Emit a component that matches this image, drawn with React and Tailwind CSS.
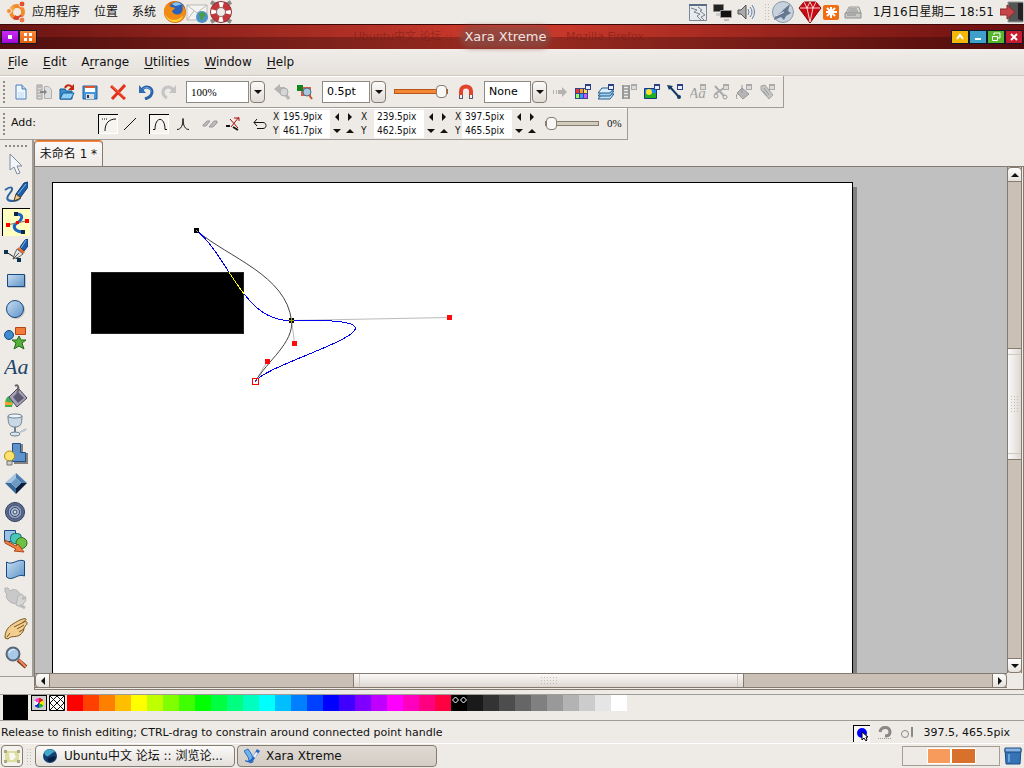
import { useState } from "react";
import clsx from "clsx";

const SWATCHES = [
  "bg-[#ff0000]", "bg-[#ff4000]", "bg-[#ff8000]", "bg-[#ffbf00]", "bg-[#ffff00]", "bg-[#bfff00]",
  "bg-[#80ff00]", "bg-[#40ff00]", "bg-[#00ff00]", "bg-[#00ff40]", "bg-[#00ff80]", "bg-[#00ffbf]",
  "bg-[#00ffff]", "bg-[#00bfff]", "bg-[#0080ff]", "bg-[#0040ff]", "bg-[#0000ff]", "bg-[#4000ff]",
  "bg-[#8000ff]", "bg-[#bf00ff]", "bg-[#ff00ff]", "bg-[#ff00bf]", "bg-[#ff0080]", "bg-[#ff0040]",
  "bg-[#000000]", "bg-[#1a1a1a]", "bg-[#333333]", "bg-[#4d4d4d]", "bg-[#666666]", "bg-[#808080]",
  "bg-[#999999]", "bg-[#b3b3b3]", "bg-[#cccccc]", "bg-[#e5e5e5]", "bg-[#ffffff]",
];

function Svg({ s = 16, children, className }) {
  return (
    <svg viewBox={`0 0 ${s} ${s}`} width={s} height={s} className={clsx("shrink-0", className)} aria-hidden="true" fill="none">
      {children}
    </svg>
  );
}

// little window in the corner of every gallery icon
function Badge({ off }) {
  return (
    <>
      <rect x="10.5" y="0.5" width="5" height="5" fill={off ? "#dcdcda" : "#e8f0fa"} stroke={off ? "#aaa" : "#2b3f86"} />
      <path d="M10 1h6" stroke={off ? "#aaa" : "#2b3f86"} strokeWidth="2" />
    </>
  );
}

const bar = {
  fresh: <Svg><path d="M3 1h6l4 4v10H3z" fill="#eef6ff" stroke="#4a7fbb" /><path d="M9 1v4h4" fill="#b9d7f2" stroke="#4a7fbb" /><path d="M5 8h6v6H5z" fill="#d5e8fa" /></Svg>,
  film: <Svg><path d="M1 1h5v14H1z" fill="#ddd" stroke="#999" /><path d="M2 3h3M2 6h3M2 9h3M2 12h3" stroke="#999" /><path d="M8.500 2.500h4l3 3v9h-7z" fill="#dedede" stroke="#b0b0b0" /><path d="M4 8h5" stroke="#888" strokeWidth="2" /><path d="M8 5l3 3-3 3z" fill="#888" /></Svg>,
  open: <Svg><path d="M1 5h5l1 2h6v8H1z" fill="#3c8fd0" stroke="#155a94" /><path d="M1 15l3-6h11l-3 6z" fill="#8fd0fa" stroke="#155a94" /><path d="M6 4c2-4 5-3 7-1" stroke="#c3260e" strokeWidth="2" /><path d="M15 0v6H9z" fill="#c3260e" /></Svg>,
  save: <Svg><path d="M1 2h14v13H1z" fill="#4596dd" stroke="#1f5f9f" /><path d="M3 3h10v5H3z" fill="#fff" /><path d="M3 2h10v2H3z" fill="#e2552d" /><path d="M4 10h8v5H4z" fill="#d8dde2" /><path d="M5 11h2v3H5z" fill="#334" /></Svg>,
  remove: <Svg><path d="M1 2l14 13M15 1L2 15" stroke="#e3321a" strokeWidth="3" /><path d="M2 2l12 11" stroke="#f6664b" /></Svg>,
  undo: <Svg><path d="M4 6c3-5 10-3 10 2 0 4-4 6-7 7" stroke="#2b63a8" strokeWidth="3" /><path d="M4 6c3-4 9-3 9 2" stroke="#6fa8e0" /><path d="M1 1v8h7z" fill="#2f6cb3" /></Svg>,
  redo: <Svg><path d="M12 6c-3-5-10-3-10 2 0 3 2 5 4 6" stroke="#c4c4c4" strokeWidth="3" /><path d="M15 1v8H8z" fill="#c4c4c4" /></Svg>,
  zoomPrev: <Svg><path d="M0 5l6-5v3h5v5H6v2z" fill="#b5b5b5" /><circle cx="10" cy="8" r="4" fill="#d6d6d6" stroke="#aaa" /><path d="M12 11l3 4" stroke="#b5b5b5" strokeWidth="3" /></Svg>,
  zoom: <Svg><path d="M4 3h10v9H4z" fill="#df5a41" /><path d="M0 1h6v6H0z" fill="#15831f" /><circle cx="10" cy="8" r="4" fill="#a7c6e2" stroke="#4d6b87" /><path d="M12 11l3 4" stroke="#c7512d" strokeWidth="2" /></Svg>,
  magnet: <Svg><path d="M3 14V7c0-6 10-6 10 0v7" stroke="#e3432a" strokeWidth="4" /><path d="M3 15v-4M13 15v-4" stroke="#5b5b64" strokeWidth="4" /><path d="M3 14v-3M13 14v-3" stroke="#eef" strokeWidth="2" /></Svg>,
  arrow: <Svg><path d="M1 6h1v4H1zM4 6h1v4H4zM6 6h4V3l5 5-5 5v-3H6z" fill="#b2b2b0" /></Svg>,
  colours: <Svg><path d="M0 4h13v11H0z" fill="#33468b" /><path d="M1 5h3v4H1z" fill="#e33" /><path d="M5 5h3v4H5z" fill="#f8a020" /><path d="M9 5h3v4H9z" fill="#fd5" /><path d="M1 10h3v4H1z" fill="#9f6" /><path d="M5 10h3v4H5z" fill="#39f" /><path d="M9 10h3v4H9z" fill="#c5f" /><Badge /></Svg>,
  layers: <Svg><path d="M4 10h12l-4 5H0z" fill="#bfe0f2" stroke="#225b8c" /><path d="M4 7h12l-4 5H0z" fill="#9fcdec" stroke="#225b8c" /><path d="M4 4h12l-4 5H0z" fill="#d6eefb" stroke="#225b8c" /><Badge /></Svg>,
  frames: <Svg><path d="M1 1h2v14H1zM7 1h2v14H7z" fill="#999" /><path d="M3 2h4M3 5h4M3 8h4M3 11h4M3 14h4" stroke="#aaa" strokeWidth="2" /><Badge off /></Svg>,
  bitmap: <Svg><path d="M.500 4.500h12v10H.500z" fill="#1a8df0" stroke="#123a80" /><path d="M1 10c4-2 7 0 11-1v5H1z" fill="#1fae26" /><circle cx="5" cy="8" r="3" fill="#ffe32e" /><Badge /></Svg>,
  line: <Svg><path d="M3 3l9 10" stroke="#123a66" strokeWidth="2" /><path d="M0 1l6 1-4 4z" fill="#123a66" /><circle cx="12" cy="13" r="2" fill="#123a66" /><Badge /></Svg>,
  fonts: <Svg><text x="-1" y="14" className="[font-family:'Liberation_Serif',serif] text-[15px] italic" fill="#a0a0a0">Aa</text><Badge off /></Svg>,
  clip: <Svg><path d="M2 2l9 10M11 4l-9 6" stroke="#aaa" strokeWidth="2" /><circle cx="3" cy="12" r="2" stroke="#999" /><circle cx="12" cy="13" r="2" stroke="#999" /><Badge off /></Svg>,
  fills: <Svg><path d="M6 4l7 6-6 5-6-6z" fill="#b5b5b5" stroke="#999" /><path d="M6 1v8M2 9c-2 2-2 4-1 6" stroke="#999" /><Badge off /></Svg>,
  names: <Svg><path d="M2 2l4-1 8 10-4 4L2 6z" fill="#c4c4c4" stroke="#a5a5a5" /><path d="M5 4l5 7M4 7l4 5" stroke="#999" /><Badge off /></Svg>,
};

const GALLERIES = [
  ["Color gallery", bar.colours], ["Layer gallery", bar.layers], ["Frame gallery", bar.frames],
  ["Bitmap gallery", bar.bitmap], ["Line gallery", bar.line], ["Font gallery", bar.fonts],
  ["Clipart gallery", bar.clip], ["Fill gallery", bar.fills], ["Name gallery", bar.names],
];

const TOOLS = [
  ["Selector", <Svg s={24}><path d="M6 2v16l4-3 3 7 3-1-3-7h5z" fill="#f3f5f9" stroke="#7d8ba0" /></Svg>],
  ["Freehand", <Svg s={24}><path d="M1 9c7-5 9-2 5 3s-4 8 3 8c3 0 5-1 7-3" stroke="#2a62a3" strokeWidth="2" /><path d="M12 13L20 2l4-1v5l-8 11z" fill="#1d5fa8" stroke="#103c70" /><path d="M14 13l8-10" stroke="#80b8e8" /><path d="M10 20l2-7 5 4z" fill="#ecc98a" stroke="#4c3a20" /></Svg>],
  ["Shape editor", <Svg s={24}><path d="M11 3c9 0 6 6 1 9s-3 8 5 9" stroke="#1b65c3" strokeWidth="3" /><path d="M2 14l19-4" stroke="#777" /><path d="M9 1h4v4H9zM16 19h4v4h-4z" fill="#0b2a48" /><path d="M1 12h4v4H1zM20 8h4v4h-4zM11 10h3v3h-3z" fill="#f00" /></Svg>],
  ["Pen", <Svg s={24}><path d="M2 13l13 8" stroke="#222" /><path d="M0 11h4v4H0zM13 19h4v4h-4z" fill="#0b3452" /><path d="M16 8l5-7 3-1v7l-4 5z" fill="#1d5fa8" stroke="#103c70" /><path d="M17 9l5-8" stroke="#80b8e8" /><path d="M15 8l6 5-2 2-6-5z" fill="#e66b2c" /><path d="M13 10l6 5-4 3-6 2 2-6z" fill="#e4e4e4" stroke="#666" /><path d="M9 20l6-6" stroke="#555" /></Svg>],
  ["Rectangle", <Svg s={24}><path d="M4 7h18v13H4z" fill="#999" opacity=".5" /><path d="M3.500 6.500h17v12h-17z" fill="url(#blue)" stroke="#174a80" /></Svg>],
  ["Ellipse", <Svg s={24}><circle cx="12" cy="13" r="9" fill="#999" opacity=".5" /><circle cx="11" cy="12" r="8.500" fill="url(#blue)" stroke="#174a80" /></Svg>],
  ["QuickShape", <Svg s={24}><circle cx="5" cy="9" r="4.500" fill="#3e8bd2" stroke="#174a80" /><path d="M11.500 1.500h10v7h-10z" fill="#f27b3b" stroke="#b34616" /><path d="M15 10l2 4h5l-4 3 2 6-5-3-5 3 2-6-4-3h5z" fill="#55b13c" stroke="#246c1a" /></Svg>],
  ["Text", <Svg s={24}><text x="0" y="19" className="[font-family:'Liberation_Serif',serif] text-[22px] italic" fill="#22456c">Aa</text></Svg>],
  ["Fill", <Svg s={24}><path d="M5 12c-4 2-4 6-4 11h7l1-5z" fill="#3fae55" /><path d="M1 17c2 1 4 2 7 1v3H1z" fill="#f7a02b" /><path d="M5 13l9-9 9 10-10 9z" fill="#a5a1b8" stroke="#484558" /><path d="M9 13l5-5 6 6-6 5z" fill="#5d5a72" /><path d="M11 2c4-3 4 4 2 7" stroke="#666" strokeWidth="2" /></Svg>],
  ["Transparency", <Svg s={24}><path d="M14 20c6-5 9-5 9-4s-4 4-9 4" fill="#b9c6d0" /><path d="M4 3c0 9 2 11 7 11s7-2 7-11z" fill="#c9d8e5" stroke="#6d8193" /><ellipse cx="11" cy="3" rx="7" ry="2" fill="#eef4f8" stroke="#6d8193" /><path d="M11 14v6" stroke="#6d8193" strokeWidth="2" /><ellipse cx="11" cy="21" rx="5" ry="2" fill="#dbe5ec" stroke="#6d8193" /></Svg>],
  ["Shadow", <Svg s={24}><path d="M10 2h9v9h5v11H10z" fill="#555" opacity=".7" /><path d="M8.500 1.500h8v9h5v9h-13z" fill="#5f93cb" stroke="#204f86" /><circle cx="5.500" cy="14" r="5" fill="#fde36b" stroke="#b28a18" /><path d="M3 19h5v4H3z" fill="#cfcfcf" stroke="#777" /></Svg>],
  ["Bevel", <Svg s={24}><path d="M12 2L1 12h6l5-5z" fill="#a4c3e0" /><path d="M12 2l11 10h-6l-5-5z" fill="#4c7eb0" /><path d="M1 12l11 11v-6l-5-5z" fill="#3a689a" /><path d="M23 12L12 23v-6l5-5z" fill="#0b1f3c" /><path d="M12 7l5 5-5 5-5-5z" fill="#6d9ac5" /></Svg>],
  ["Contour", <Svg s={24}><circle cx="11" cy="12" r="9.500" fill="#606f94" stroke="#2e3b5b" /><circle cx="11" cy="12" r="7" fill="#8fa0c0" stroke="#3a4869" /><circle cx="11" cy="12" r="4.500" fill="#aebdd6" stroke="#3a4869" /><circle cx="11" cy="12" r="2" fill="#cfe0ec" stroke="#3a4869" /></Svg>],
  ["Blend", <Svg s={24}><path d="M.500 1.500h11v11H.500z" fill="#9dc0e6" stroke="#1a4b87" /><rect x="6.500" y="4.500" width="11" height="10" rx="4" fill="#48c6b8" stroke="#1c6c6c" /><circle cx="17.500" cy="14" r="5.500" fill="#6fc047" stroke="#2b6f1c" /><path d="M1 11l11 6 2-2 6 8-10-1 2-2L1 14z" fill="#f28345" stroke="#a9491b" /></Svg>],
  ["Mould", <Svg s={24}><path d="M2.500 4c6 4 11-4 18-1v15c-7-3-12 6-18 1z" fill="url(#blue)" stroke="#174a80" /></Svg>],
  ["Live effects", <Svg s={24}><path d="M1 1h3l2 3c4-3 8-1 10 3s0 8-2 10l-6-1C3 14 1 9 3 7L1 5z" fill="#c9c9c9" stroke="#b4b4b4" /><path d="M14 9l4-2 4 6-5 7-5-2z" fill="#d6d6d6" stroke="#b4b4b4" /><path d="M18 12l4-2M16 18l5 3" stroke="#bcbcbc" strokeWidth="3" /></Svg>],
  ["Push", <Svg s={24}><path d="M1 22c0-7 3-11 8-14 6-4 11-6 13-5 1 1-3 3-4 4 3-2 5-2 5 0 0 3-2 2-3 5 0 3-2 5-4 7-5 3-9 0-12 4z" fill="#f2cf91" stroke="#79551c" /><path d="M10 11l8-4M13 13l7-4M15 16l5-3M3 21l3-4" stroke="#79551c" /></Svg>],
  ["Zoom", <Svg s={24}><path d="M14 15l8 7" stroke="#7a3a20" strokeWidth="4" /><path d="M15 15l7 7" stroke="#f08b5a" strokeWidth="2" /><circle cx="9" cy="9" r="6.500" fill="#a9c9e8" stroke="#59677a" strokeWidth="2" /><path d="M5 8c1-3 4-4 6-3" stroke="#fff" /></Svg>],
];

function Grip() {
  return <span className="mr-[4px] ml-[3px] h-[22px] w-[2px] shrink-0 bg-[repeating-linear-gradient(to_bottom,#8f8b86_0_2px,transparent_2px_4px)]" />;
}

// raised 3-column dots of the panel applets
function Dots({ className }) {
  return <span className={clsx("shrink-0 bg-[radial-gradient(#c2bdb6_1px,transparent_1px)] bg-[length:3px_3px]", className)} />;
}

function BarButton({ label, children, className }) {
  return (
    <button type="button" aria-label={label} title={label} className={clsx("flex h-6 w-[23px] shrink-0 items-center justify-center", className)}>
      {children}
    </button>
  );
}

function Caret({ dir = "down", className }) {
  const d = { down: "M1 3h8l-4 4z", up: "M1 7h8l-4-4z", left: "M7 1v8l-4-4z", right: "M3 1v8l4-4z" }[dir];
  return <Svg s={10} className={className}><path d={d} fill="#111" /></Svg>;
}

const dropBox = "flex h-[22px] w-[15px] shrink-0 items-center justify-center rounded-[4px] border border-[#857c72] bg-linear-to-b from-[#fbfaf9] to-[#e0dcd6]";
const field = "h-[22px] border border-[#8e8a85] bg-white outline-none text-black";
const narrow = "text-[11px] [font-family:'Liberation_Serif',serif]";

function Combo({ label, value, className, list }) {
  return (
    <span className="flex shrink-0 gap-px">
      <input aria-label={label} defaultValue={value} className={clsx(field, className)} />
      <button type="button" aria-label={list} className={dropBox}><Caret /></button>
    </span>
  );
}

function Slider({ label, value, className }) {
  return (
    <input
      type="range" aria-label={label} defaultValue={value}
      className={clsx(
        "h-4 w-[54px] shrink-0 appearance-none bg-transparent",
        "[&::-webkit-slider-runnable-track]:h-[5px] [&::-webkit-slider-runnable-track]:border [&::-webkit-slider-runnable-track]:border-[#857c72]",
        "[&::-webkit-slider-thumb]:-mt-[5px] [&::-webkit-slider-thumb]:h-[13px] [&::-webkit-slider-thumb]:w-[11px] [&::-webkit-slider-thumb]:appearance-none [&::-webkit-slider-thumb]:rounded-[4px] [&::-webkit-slider-thumb]:border [&::-webkit-slider-thumb]:border-[#857c72] [&::-webkit-slider-thumb]:bg-[#f8f7f5]",
        className
      )}
    />
  );
}

function Coord({ x, y, name, wide }) {
  return (
    <div className="grid shrink-0 text-[10px] leading-[14px] [font-family:'DejaVu_Sans_Condensed','DejaVu_Sans',sans-serif]">
      {[["X", x, "left", "right"], ["Y", y, "down", "up"]].map(([axis, v, a, b]) => (
        <div key={axis} className="flex h-[14px] items-center">
          <label htmlFor={`${name}${axis}`} className={wide ? "w-[13px]" : "w-[7px]"}>{axis}</label>
          <input id={`${name}${axis}`} defaultValue={v} className="h-[14px] w-[50px] bg-white pl-[3px] outline-none" />
          <button type="button" aria-label={`${name} ${axis} decrease`} className="flex w-[13px] justify-center"><Caret dir={a} /></button>
          <button type="button" aria-label={`${name} ${axis} increase`} className="flex w-[13px] justify-center"><Caret dir={b} /></button>
        </div>
      ))}
    </div>
  );
}

function TopPanel() {
  return (
    <header className="flex h-6 items-center text-[12px]">
      <Svg s={24} className="ml-[5px]">
        <circle cx="12" cy="12" r="6" stroke="#f28a2e" strokeWidth="4" />
        <path d="M6 12a6 6 0 0 1 3-5" stroke="#f5a742" strokeWidth="4" /><path d="M9 17a6 6 0 0 0 8-1" stroke="#d9402d" strokeWidth="4" />
        <circle cx="4" cy="11" r="2.500" fill="#f58b2c" stroke="#efebe7" /><circle cx="17" cy="4" r="3" fill="#e8502d" stroke="#efebe7" /><circle cx="17" cy="20" r="3" fill="#f0784a" stroke="#efebe7" />
      </Svg>
      <nav className="ml-[3px] flex gap-[14px]">
        <button type="button">应用程序</button>
        <button type="button">位置</button>
        <button type="button">系统</button>
      </nav>
      <div className="ml-[7px] flex">
        <BarButton label="Firefox" className="w-6">
          <Svg s={24}><circle cx="12" cy="12" r="11" fill="#e06a12" /><circle cx="14" cy="10" r="8" fill="#2b62b8" /><path d="M9 4c3-3 8-2 10 1-3-1-4 1-7 1z" fill="#7fc3ee" /><path d="M1 10C2 6 4 3 6 4c0 1 0 2 2 3 2 0 3 1 4 1-1 2-3 2-3 3 1 4 7 5 10 1 1-2 1-5 0-7 4 3 5 9 1 14-6 6-20 4-19-9z" fill="#f28a16" /><path d="M2 14c3 7 14 8 18 1-1 9-15 10-18-1z" fill="#ffd23c" /></Svg>
        </BarButton>
        <BarButton label="Mail" className="w-6">
          <Svg s={24}><path d="M1 5h20v15H1z" fill="#f4f4f2" stroke="#b9b9b5" /><path d="M1 5l10 8L21 5M1 20l7-9M21 20l-7-9" stroke="#b9b9b5" /><circle cx="16" cy="17" r="6" fill="#4d94cf" /><path d="M13 13l5-1 2 4-3 1 0 4-3-2z" fill="#4c9c45" /></Svg>
        </BarButton>
        <BarButton label="Help" className="w-6">
          <Svg s={24}><path d="M2 2l5 3M22 2l-5 3M2 22l5-3M22 22l-5-3" stroke="#8a8a8a" strokeWidth="4" /><circle cx="12" cy="12" r="7.500" stroke="#fff" strokeWidth="6" /><circle cx="12" cy="12" r="7.500" stroke="#c4373a" strokeWidth="6" strokeDasharray="7.780 4" strokeDashoffset="-2" /><circle cx="12" cy="12" r="10.500" stroke="#8f2b2d" /><circle cx="12" cy="12" r="4.500" fill="#eeebe6" stroke="#8a6a6a" /></Svg>
        </BarButton>
      </div>
      <div className="ml-auto flex items-center">
        <Svg s={20}><path d="M1.500 2.500h17v16h-17z" fill="#e6eaee" stroke="#7d8894" /><path d="M1 3h18" stroke="#5a6d84" strokeWidth="2" /><path d="M3 6l6 2-3 2 6 2-3 2 4 4M10 5l4 3-2 1 5 4-4 2 3 3" stroke="#7b828a" /></Svg>
        <Svg s={20} className="ml-1"><path d="M1.500 2.500h10v7h-10z" fill="#222" stroke="#888" /><path d="M4 11h5v3H4z" fill="#ccc" /><path d="M8.500 8.500h11v7h-11z" fill="#111" stroke="#999" /><path d="M12 17h5v2h-5z" fill="#bbb" /></Svg>
        <Svg s={20} className="ml-1"><path d="M2 8h3l5-5v14l-5-5H2z" fill="#aaa" stroke="#555" /><path d="M12 7q2 3 0 6M14 5q4 5 0 10M16 3q5 7 0 14" stroke="#5e7fa6" /></Svg>
        <Dots className="ml-2 h-[18px] w-[6px]" />
        <Svg s={24} className="ml-px"><circle cx="12" cy="12" r="10.500" fill="#c7d2de" stroke="#8b9aac" /><path d="M3 20c1-6 7-6 9-10l7-6-2 7 3 2-5 3-2 4-3-3z" fill="#66788f" /><path d="M5 16l8-4" stroke="#eef" /></Svg>
        <Svg s={24} className="ml-[3px]"><path d="M6 2h12l5 6-11 15L1 8z" fill="#c80a12" stroke="#8d070c" /><path d="M2 8h20M6 2l3 6 3-6 3 6 3-6M9 8l3 14 3-14" stroke="#fff" opacity=".8" /></Svg>
        <Svg s={16} className="ml-px"><rect width="16" height="15" y="1" rx="2" fill="#f06d10" /><path d="M8 3v11M3 8h11M4 4l8 8M12 4l-8 8" stroke="#fff" strokeWidth="2" /></Svg>
        <Svg s={18} className="ml-[5px]"><path d="M5 4h10l2 6H2z" fill="#d9d9d7" stroke="#999" /><path d="M1 10h16v5H1z" fill="#c8c8c6" stroke="#8f8f8d" /><path d="M5 6h8M4 8h10M3 12h9" stroke="#888" /></Svg>
        <time className="ml-[11px] whitespace-nowrap">1月16日星期二 18:51</time>
        <Svg s={24} className="ml-[6px]"><path d="M8 2h15v20H8z" fill="#555" stroke="#999" /><path d="M18 3h5v18l-5-2z" fill="#222" /><path d="M0 9h7V5l8 7-8 7v-4H0z" fill="#c4464a" stroke="#8a2a2d" /></Svg>
      </div>
    </header>
  );
}

const winBtn = "flex h-[14px] w-[18px] items-center justify-center border border-[#10182a]";

function TitleBar() {
  return (
    <div className="relative flex h-[25px] items-center border-t border-[#3d0808] bg-linear-to-r from-[#6a1413] via-[#d03c2d] to-[#6a1010] text-[#f1e4e0]">
      <div className="absolute inset-x-0 bottom-0 h-3 bg-black/25" />
      <div className="relative flex w-[78px] pl-px">
        <button type="button" aria-label="Window menu" className={clsx(winBtn, "bg-linear-to-b from-[#cb2bf5] to-[#a303d4]")}><span className="size-1 bg-white" /></button>
        <button type="button" aria-label="All desktops" className={clsx(winBtn, "bg-linear-to-b from-[#f8893a] to-[#e65f05]")}>
          <Svg s={10}><path d="M1 1h3v3H1zM6 1h3v3H6zM1 6h3v3H1zM6 6h3v3H6z" fill="#fff" /></Svg>
        </button>
      </div>
      <div className="relative grid grow grid-cols-[1fr_auto_1fr] items-center gap-3 pr-[18px] whitespace-nowrap">
        <span className="text-right text-[11px] text-[#7d1b16]/60">Ubuntu中文 论坛 ::</span>
        <span className="rounded-full bg-[#8a4a42]/80 text-[13px] leading-[14px] shadow-[0_0_5px_4px_#8a4a42cc]">Xara Xtreme</span>
        <span className="text-[11px] text-[#7d1b16]/60">- Mozilla Firefox</span>
      </div>
      <div className="relative flex pr-px">
        <button type="button" aria-label="Shade" className={clsx(winBtn, "bg-[#f4b80b]")}><Svg s={10}><path d="M2 7l3-4 3 4" stroke="#fff" strokeWidth="2" /></Svg></button>
        <button type="button" aria-label="Minimize" className={clsx(winBtn, "bg-[#3fa0cc]")}><span className="mt-1 h-[2px] w-[6px] bg-white" /></button>
        <button type="button" aria-label="Restore" className={clsx(winBtn, "bg-[#56b52b]")}><Svg s={10}><path d="M3 3V1h6v5H7M1.500 4.500h5v4h-5z" stroke="#fff" /></Svg></button>
        <button type="button" aria-label="Close" className={clsx(winBtn, "bg-[#c61c30]")}><Svg s={10}><path d="M2 2l6 6M8 2L2 8" stroke="#fff" strokeWidth="2" /></Svg></button>
      </div>
    </div>
  );
}

function StandardBar() {
  return (
    <div className="flex h-8 w-fit items-center border-r border-b border-[#a09d99] pr-[5px] shadow-[inset_0_1px_0_#fff]">
      <Grip />
      <BarButton label="New">{bar.fresh}</BarButton>
      <BarButton label="Import">{bar.film}</BarButton>
      <BarButton label="Open">{bar.open}</BarButton>
      <BarButton label="Save">{bar.save}</BarButton>
      <BarButton label="Delete" className="ml-[5px]">{bar.remove}</BarButton>
      <BarButton label="Undo" className="ml-[5px]">{bar.undo}</BarButton>
      <BarButton label="Redo" className="mr-[6px]">{bar.redo}</BarButton>
      <Combo label="Zoom" list="Zoom levels" value="100%" className={clsx(narrow, "w-[63px] pl-1")} />
      <BarButton label="Previous zoom" className="ml-[5px]">{bar.zoomPrev}</BarButton>
      <BarButton label="Zoom to drawing" className="mr-[6px]">{bar.zoom}</BarButton>
      <Combo label="Line width" list="Line widths" value="0.5pt" className="w-[48px] pl-1 text-[11px]" />
      <Slider label="View quality" value={100} className="ml-2 [&::-webkit-slider-runnable-track]:bg-[#f58634] [&::-webkit-slider-runnable-track]:border-[#b3591c]" />
      <BarButton label="Snap to objects" className="ml-[6px] mr-[7px]">{bar.magnet}</BarButton>
      <label className="flex shrink-0 gap-px">
        <select aria-label="Feather" className={clsx(field, "w-[47px] appearance-none pl-1 text-[11px] leading-[20px]")}>
          <option>None</option>
        </select>
        <span className={dropBox}><Caret /></span>
      </label>
      <BarButton label="Apply" className="ml-px">{bar.arrow}</BarButton>
      {GALLERIES.map(([label, icon]) => <BarButton key={label} label={label}>{icon}</BarButton>)}
    </div>
  );
}

function InfoBar() {
  const pressed = "flex size-5 items-center justify-center border-t border-l border-black bg-[#f6f4f1] shadow-[inset_-1px_-1px_0_#fff]";
  return (
    <div className="flex h-8 w-fit items-center border-r border-b border-[#a09d99] pr-[5px] shadow-[inset_0_1px_0_#fff]">
      <Grip />
      <span className="w-[89px] pl-[2px] text-[11px]">Add:</span>
      <button type="button" aria-label="Curve" className={pressed}><Svg><path d="M4 15C4 7 8 3 15 3" stroke="#111" /><path d="M1 3h5" stroke="#111" strokeDasharray="1 1" /></Svg></button>
      <BarButton label="Line"><Svg><path d="M2 14L14 2" stroke="#111" /></Svg></BarButton>
      <button type="button" aria-label="Smooth" className={clsx(pressed, "ml-2")}><Svg><path d="M1 13.500h2C3 0 13 0 13 13.500h2" stroke="#111" /></Svg></button>
      <BarButton label="Cusp" className="ml-[2px]"><Svg><path d="M2 13.500c4 0 6-4 6-11 0 7 2 11 6 11" stroke="#111" /></Svg></BarButton>
      <BarButton label="Break" className="ml-1"><Svg><path d="M1 9l4-4h3L4 10H1zM7 11l5-6h3v2l-4 4z" fill="#bbb" stroke="#999" /></Svg></BarButton>
      <BarButton label="Delete point"><Svg><path d="M1 10h4M8 11l5 3" stroke="#111" strokeWidth="2" /><path d="M5 3l8 9M14 1L6 11M9 2h5v3" stroke="#a80d10" /></Svg></BarButton>
      <BarButton label="Reverse" className="ml-[4px] mr-[2px]"><Svg><path d="M2 6.500h9c4 0 4 6 0 6H5M5 3L2 6.500 5 10" stroke="#111" /></Svg></BarButton>
      <div className="flex items-center gap-[5px]">
        <Coord name="start" x="195.9pix" y="461.7pix" />
        <Coord name="end" x="239.5pix" y="462.5pix" wide />
        <Coord name="handle" x="397.5pix" y="465.5pix" />
      </div>
      <Slider label="Smoothing" value={0} className="ml-[7px] [&::-webkit-slider-runnable-track]:bg-[#d4cbbf]" />
      <output className={clsx(narrow, "ml-2")}>0%</output>
    </div>
  );
}

function Toolbox() {
  const [tool, setTool] = useState("Shape editor");
  return (
    <div className="h-fit w-[34px] shrink-0 border-r-2 border-b border-[#a09d99] pt-[5px] pb-[5px]">
      <span className="mx-auto mb-[3px] block h-[2px] w-[23px] bg-[repeating-linear-gradient(to_right,#8f8b86_0_2px,transparent_2px_4px)]" />
      <div className="flex flex-col items-center gap-px">
        {TOOLS.map(([label, icon]) => (
          <button
            key={label} type="button" aria-label={label} onClick={() => setTool(label)}
            className={clsx("flex h-7 w-7 items-center justify-center", tool === label && "border-t border-l border-black bg-[#ffffbf]")}
          >{icon}</button>
        ))}
      </div>
    </div>
  );
}

function Drawing() {
  const blue = "M196.500 230.500C230 258 243 322 291.500 320.500C449 317 267 361 255.500 381.500";
  return (
    <svg viewBox="53 183 799 600" width="799" height="600" fill="none" role="img" aria-label="Drawing">
      <clipPath id="box"><rect x="91" y="272" width="153" height="62" /></clipPath>
      <rect x="91.500" y="272.500" width="152" height="61" fill="#000" stroke="#222" />
      <path d="M291 320.500L449 317.500M291.500 320L294.500 343M255.500 381L267.500 361" stroke="#bcbcbc" />
      <path d="M196.500 230.500C229 258 286 275 291.500 320.500C294 343 267 361 255.500 381.500" stroke="#444" />
      <g shapeRendering="crispEdges">
        <path d={blue} stroke="#0000f0" />
        <path d={blue} stroke="#ffff00" clipPath="url(#box)" />
        <path d="M194 228h5v5h-5zM289 318h5v5h-5z" fill="#000" />
        <path d="M289 320.500h5M291.500 318v5" stroke="#a8a800" />
        <path d="M196 230l2 2" stroke="#999" />
        <path d="M447 315h5v5h-5zM292 341h5v5h-5zM265 359h5v5h-5z" fill="#ff0a0a" />
        <rect x="252.500" y="378.500" width="6" height="6" fill="#fff" stroke="#f00" />
        <path d="M255 382l2-3" stroke="#339" />
      </g>
    </svg>
  );
}

const sbBtn = "flex shrink-0 items-center justify-center border border-[#857a70] bg-linear-to-b from-[#fdfdfc] to-[#e6e1dc]";

function ScrollV() {
  return (
    <div className="mr-px flex w-[15px] shrink-0 flex-col border-x border-[#857a70] bg-[#cbc0b6]">
      <button type="button" aria-label="Scroll up" className={clsx(sbBtn, "-mx-px h-[15px] rounded-t-[4px]")}><Caret dir="up" /></button>
      <div className="grow-[167]" />
      <div className="flex h-[112px] items-center justify-center border-y border-[#857a70] bg-linear-to-r from-[#fbfaf9] to-[#ddd7d1] py-[5px]">
        <span className="flex h-full w-full items-center justify-center border-y border-[#cfc9c2]"><Dots className="h-[18px] w-[9px]" /></span>
      </div>
      <div className="grow-[199]" />
      <button type="button" aria-label="Scroll down" className={clsx(sbBtn, "-mx-px h-[15px] rounded-b-[4px]")}><Caret /></button>
    </div>
  );
}

function ScrollH() {
  return (
    <div className="mr-4 mb-px flex h-[15px] border-y border-[#857a70] bg-[#cbc0b6]">
      <button type="button" aria-label="Scroll left" className={clsx(sbBtn, "-my-px w-[15px] rounded-l-[4px]")}><Caret dir="left" /></button>
      <div className="grow-[303]" />
      <div className="flex w-[391px] items-center justify-center border-x border-[#857a70] bg-linear-to-b from-[#fbfaf9] to-[#ddd7d1] px-[5px]">
        <span className="flex h-full w-full items-center justify-center border-x border-[#cfc9c2]"><Dots className="h-[9px] w-[18px]" /></span>
      </div>
      <div className="grow-[248]" />
      <button type="button" aria-label="Scroll right" className={clsx(sbBtn, "-my-px w-[15px] rounded-r-[4px]")}><Caret dir="right" /></button>
    </div>
  );
}

function Document() {
  return (
    <main className="flex min-w-0 grow flex-col">
      <div className="flex h-[26px]">
        <button type="button" className="h-full w-[69px] rounded-t-[4px] border border-b-0 border-[#857a70] border-t-[#d9702c] bg-linear-to-b from-[#fbfaf9] to-[#efebe7] text-[12px] shadow-[inset_0_1px_0_#ef8a4a]">未命名 1 *</button>
      </div>
      <div className="flex grow flex-col border border-[#857a70]">
        <div className="flex grow">
          <div className="relative grow overflow-hidden bg-[#c0c0c0]">
            <div className="absolute top-[15px] left-[17px] w-[801px] border border-black bg-white shadow-[4px_5px_0_#808080]"><Drawing /></div>
          </div>
          <ScrollV />
        </div>
        <ScrollH />
      </div>
    </main>
  );
}

function Palette() {
  return (
    <div className="mt-1 flex h-[27px] items-start border-y border-[#a09d99] pl-[3px]">
      <span className="h-[25px] w-[25px] shrink-0 bg-black" />
      <button type="button" aria-label="Edit color" className="ml-[3px] size-4 shrink-0 border border-black bg-[#d0d0d0] p-[2px]">
        <span className="block size-full rounded-full bg-[conic-gradient(#e02020_0_16%,#f5e400_0_33%,#1fb82c_0_50%,#1430d8_0_66%,#eee_0_83%,#ff3fd0_0)]" />
      </button>
      <button type="button" aria-label="No color" className="mr-[2px] ml-[2px] size-4 shrink-0">
        <Svg><path d="M.500.500h15v15H.500z" fill="#fff" stroke="#000" /><path d="M1 8l7-7M1 15L15 1M8 15l7-7M1 8l7 7M1 1l14 14M8 1l7 7" stroke="#111" /></Svg>
      </button>
      {SWATCHES.map(c => (
        <button key={c} type="button" aria-label={`Color ${c.slice(4, -1)}`} className={clsx("flex size-4 shrink-0 justify-center", c)}>
          {c === "bg-[#000000]" && <Svg><path d="M4.500 2l3 3-3 3-3-3zM12.500 2l3 3-3 3-3-3z" stroke="#fff" /></Svg>}
        </button>
      ))}
    </div>
  );
}

function StatusBar() {
  return (
    <div className="flex h-[22px] items-center pt-[2px] pr-[14px] pl-px text-[11px]">
      <p className="mr-auto whitespace-nowrap">Release to finish editing; CTRL-drag to constrain around connected point handle</p>
      <span className="flex size-[17px] items-center justify-center border-t border-l border-black bg-[#f8f7f5]">
        <Svg><circle cx="8" cy="7" r="5" fill="#00f" /><path d="M8 6v8l2-2 2 3 1-1-1-3h2z" fill="#fff" stroke="#000" /></Svg>
      </span>
      <Svg className="ml-[7px]"><path d="M3 7c1-6 10-6 10 0 0 3-2 4-5 4" stroke="#888" strokeWidth="3" /><path d="M1 13.500h13" stroke="#999" strokeDasharray="1 1" /></Svg>
      <Svg className="ml-[7px]"><circle cx="5" cy="9" r="3.500" stroke="#888" /><path d="M11 2h2v9l-1 2-1-2z" fill="#888" /></Svg>
      <output className="ml-[7px]">397.5, 465.5pix</output>
    </div>
  );
}

const task = "flex h-[22px] w-[200px] items-center gap-[6px] rounded-[4px] border border-[#857c72] px-[6px] text-left";

function Taskbar() {
  return (
    <footer className="flex h-[25px] items-center border-t border-white pl-px text-[12px]">
      <button type="button" aria-label="Show desktop" className="flex size-[22px] items-center justify-center rounded-[4px] border border-[#857c72] bg-[#f4f2ef]">
        <Svg><path d="M1 3h14v11H1z" fill="#dedd9e" /><path d="M0 2h3v3H0zM13 2h3v3h-3zM0 12h3v3H0zM13 12h3v3h-3z" fill="#a9aa84" /><path d="M5 5h5l2 4-3 3H6z" fill="#f8f8f4" /></Svg>
      </button>
      <Dots className="mx-[3px] h-[17px] w-[6px]" />
      <div className="flex gap-[2px]">
        <button type="button" className={clsx(task, "bg-linear-to-b from-[#fbfaf9] to-[#e4e0db]")}>
          <Svg><circle cx="8" cy="8" r="7" fill="#123f70" /><path d="M2 4c3-3 8-4 11 0-3 0-4 3-7 4-2 1-3-1-4-4z" fill="#3fa7c9" /><path d="M5 11c3-2 7-3 9-2-1 4-5 5-7 5z" fill="#0a2040" /></Svg>
          <span className="whitespace-nowrap">Ubuntu中文 论坛 :: 浏览论...</span>
        </button>
        <button type="button" className={clsx(task, "bg-linear-to-b from-[#ded9d2] to-[#d3cdc5]")}>
          <Svg><path d="M0 3l4-2 4 6 1 7-3 1-2-6z" fill="#6fb4f0" stroke="#2b6cb8" /><path d="M1 12c4 2 7-1 8-4l4-7 3 2-5 7c-2 4-6 6-10 3z" fill="#2467c4" /><path d="M9 8l3-4 2 1-3 5z" fill="#eef" /></Svg>
          <span>Xara Xtreme</span>
        </button>
      </div>
      <div className="ml-auto flex h-5 w-[98px] border border-[#a79c90] p-px">
        <button type="button" aria-label="Workspace 1" className="grow basis-0" />
        <button type="button" aria-label="Workspace 2" className="grow basis-0 border border-white bg-[#f79b5d]" />
        <button type="button" aria-label="Workspace 3" className="grow basis-0 border border-white bg-[#d7712b]" />
        <button type="button" aria-label="Workspace 4" className="grow basis-0" />
      </div>
      <button type="button" aria-label="Trash" className="mr-[2px] ml-1">
        <Svg s={18}><path d="M1 2h16l-1 15H2z" fill="#3572b6" stroke="#1d4a80" /><path d="M1 1h16v4H1z" fill="#87b4e2" stroke="#1d4a80" /><path d="M5 7v8" stroke="#6ca4dc" strokeWidth="2" /></Svg>
      </button>
    </footer>
  );
}

const MENUS = ["File", "Edit", "Arrange", "Utilities", "Window", "Help"];
// index of the underlined letter
const ACCEL = { Arrange: 1 };

export default function App() {
  return (
    <div className="flex min-h-screen flex-col overflow-hidden bg-[#eeebe6] text-[#111] [font-family:'DejaVu_Sans','Noto_Sans_CJK_SC',sans-serif]">
      <svg width="0" height="0" className="absolute" aria-hidden="true">
        <linearGradient id="blue" x1="0" y1="0" x2="1" y2="1"><stop stopColor="#c9def2" /><stop offset="1" stopColor="#5e93c8" /></linearGradient>
      </svg>
      <TopPanel />
      <TitleBar />
      <nav className="flex h-[27px] items-center gap-px border-b border-[#cfc9c2] bg-linear-to-b from-[#f0edea] to-[#e5e0da] pl-px text-[12px]">
        {MENUS.map(m => {
          const i = ACCEL[m] || 0;
          return <button key={m} type="button" className="px-[7px]">{m.slice(0, i)}<u className="underline-offset-2">{m[i]}</u>{m.slice(i + 1)}</button>;
        })}
      </nav>
      <StandardBar />
      <InfoBar />
      <div className="flex grow">
        <Toolbox />
        <Document />
      </div>
      <Palette />
      <StatusBar />
      <Taskbar />
    </div>
  );
}
